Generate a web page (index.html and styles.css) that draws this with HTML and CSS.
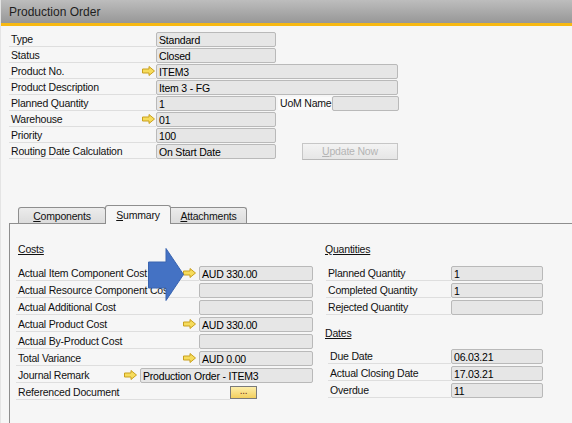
FILE: index.html
```html
<!DOCTYPE html>
<html lang="en">
<head>
<meta charset="utf-8">
<title>Production Order</title>
<link rel="stylesheet" href="styles.css">
</head>
<body>
<div class="window">
  <div class="titlebar">Production Order</div>

  <div class="header">
    <div class="row"><div class="lbl">Type</div><div class="fld w120">Standard</div></div>
    <div class="row"><div class="lbl">Status</div><div class="fld w120">Closed</div></div>
    <div class="row"><div class="lbl">Product No.<svg class="link" viewBox="0 0 13 10"><polygon points="0.5,3 7,3 7,0.5 12.5,5 7,9.5 7,7 0.5,7"/></svg></div><div class="fld w242">ITEM3</div></div>
    <div class="row"><div class="lbl">Product Description</div><div class="fld w242">Item 3 - FG</div></div>
    <div class="row"><div class="lbl">Planned Quantity</div><div class="fld w120">1</div><div class="uom">UoM Name</div><div class="fld w67"></div></div>
    <div class="row"><div class="lbl">Warehouse<svg class="link" viewBox="0 0 13 10"><polygon points="0.5,3 7,3 7,0.5 12.5,5 7,9.5 7,7 0.5,7"/></svg></div><div class="fld w120">01</div></div>
    <div class="row"><div class="lbl">Priority</div><div class="fld w120">100</div></div>
    <div class="row"><div class="lbl">Routing Date Calculation</div><div class="fld w120">On Start Date</div><div class="btn-update"><u>U</u>pdate Now</div></div>
  </div>

  <div class="tabs">
    <div class="tab tab-first"><u>C</u>omponents</div>
    <div class="tab tab-active"><u>S</u>ummary</div>
    <div class="tab"><u>A</u>ttachments</div>
  </div>

  <div class="panel">
    <div class="col col-left">
      <div class="heading">Costs</div>
      <div class="crow"><div class="clbl">Actual Item Component Cost<svg class="link link-c" viewBox="0 0 13 10"><polygon points="0.5,3 7,3 7,0.5 12.5,5 7,9.5 7,7 0.5,7"/></svg></div><div class="fld w114">AUD 330.00</div></div>
      <div class="crow"><div class="clbl">Actual Resource Component Cost</div><div class="fld w114"></div></div>
      <div class="crow"><div class="clbl">Actual Additional Cost</div><div class="fld w114"></div></div>
      <div class="crow"><div class="clbl">Actual Product Cost<svg class="link link-c" viewBox="0 0 13 10"><polygon points="0.5,3 7,3 7,0.5 12.5,5 7,9.5 7,7 0.5,7"/></svg></div><div class="fld w114">AUD 330.00</div></div>
      <div class="crow"><div class="clbl">Actual By-Product Cost</div><div class="fld w114"></div></div>
      <div class="crow"><div class="clbl">Total Variance<svg class="link link-c" viewBox="0 0 13 10"><polygon points="0.5,3 7,3 7,0.5 12.5,5 7,9.5 7,7 0.5,7"/></svg></div><div class="fld w114">AUD 0.00</div></div>
      <div class="crow"><div class="clbl clbl-short">Journal Remark<svg class="link link-c" viewBox="0 0 13 10"><polygon points="0.5,3 7,3 7,0.5 12.5,5 7,9.5 7,7 0.5,7"/></svg></div><div class="fld w173">Production Order - ITEM3</div></div>
      <div class="crow"><div class="clbl clbl-ref">Referenced Document</div><div class="btn-dots">...</div></div>
    </div>
    <div class="col col-right">
      <div class="heading">Quantities</div>
      <div class="crow qrow"><div class="qlbl">Planned Quantity</div><div class="fld w92">1</div></div>
      <div class="crow qrow"><div class="qlbl">Completed Quantity</div><div class="fld w92">1</div></div>
      <div class="crow qrow"><div class="qlbl">Rejected Quantity</div><div class="fld w92"></div></div>
      <div class="heading heading-dates">Dates</div>
      <div class="crow drow"><div class="qlbl dlbl">Due Date</div><div class="fld w92">06.03.21</div></div>
      <div class="crow drow"><div class="qlbl dlbl">Actual Closing Date</div><div class="fld w92">17.03.21</div></div>
      <div class="crow drow"><div class="qlbl dlbl">Overdue</div><div class="fld w92">11</div></div>
    </div>
  </div>

  <svg class="callout" viewBox="0 0 36 53"><polygon points="0.5,14 18,14 18,0.5 35.5,26.5 18,52.5 18,40 0.5,40"/></svg>
</div>
</body>
</html>
```

FILE: styles.css
```css
* { box-sizing: border-box; }
html, body { margin: 0; padding: 0; }
body {
  background: #f6f6f6;
  font-family: "Liberation Sans", Arial, sans-serif;
  font-size: 10.5px;
  letter-spacing: -0.2px;
  color: #111;
}
.window {
  position: relative;
  width: 572px;
  height: 423px;
  overflow: hidden;
  background: #f6f6f6;
  border-left: 1px solid #e4e4e4;
}
.titlebar {
  height: 26px;
  line-height: 24px;
  padding-left: 8px;
  font-size: 12px;
  letter-spacing: 0;
  color: #1e1e1e;
  background: linear-gradient(#bdbdbd, #979797);
  border-bottom: 3px solid #f8b912;
}
.header { padding-top: 6px; }
.row {
  display: flex;
  height: 15px;
  margin: 0 0 1px 8px;
}
.lbl {
  width: 147px;
  height: 15px;
  line-height: 15px;
  padding-left: 2px;
  border-bottom: 1px solid #dedede;
  display: flex;
  align-items: center;
  justify-content: space-between;
  white-space: nowrap;
}
.link {
  width: 13px;
  height: 10px;
  margin-right: 1px;
  flex: none;
}
.link polygon {
  fill: #f6dc5c;
  stroke: #c9a01e;
  stroke-width: 1;
  stroke-linejoin: round;
}
.fld {
  height: 15px;
  line-height: 14px;
  padding-left: 2px;
  background: #e6e6e6;
  border: 1px solid #b9b9b9;
  border-radius: 2px;
  white-space: nowrap;
  overflow: hidden;
  color: #000;
}
.w120 { width: 120px; }
.w242 { width: 242px; }
.w67 { width: 67px; }
.w114 { width: 114px; }
.w173 { width: 173px; }
.w92 { width: 92px; }
.uom {
  width: 53px;
  height: 13px;
  margin: 1px 1px 0 2px;
  line-height: 13px;
  padding-left: 2px;
  background: #fbfbfb;
  white-space: nowrap;
}
.btn-update {
  width: 96px;
  height: 17px;
  margin: -1px 0 0 26px;
  line-height: 15px;
  text-align: center;
  color: #b4b4b4;
  border: 1px solid #c6c6c6;
  border-bottom-color: #b8b8b8;
  background: linear-gradient(#f3f3f3, #e6e6e6);
}
.tabs {
  display: flex;
  align-items: flex-end;
  height: 18px;
  margin: 46px 0 0 17px;
}
.tab {
  height: 16px;
  line-height: 16px;
  text-align: center;
  border: 1px solid #8e8e8e;
  border-bottom: none;
  border-left: none;
  border-radius: 0 3px 0 0;
  background: linear-gradient(#ececec, #dcdcdc);
  color: #111;
}
.tab-first {
  width: 88px;
  border-left: 1px solid #8e8e8e;
  border-radius: 3px 3px 0 0;
}
.tab-active {
  position: relative;
  z-index: 1;
  width: 66px;
  height: 19px;
  margin-bottom: -1px;
  line-height: 19px;
  border-left: 1px solid #8e8e8e;
  border-radius: 3px 3px 0 0;
  background: #f6f6f6;
  margin-left: -1px;
}
.tab-active + .tab { width: 76px; }
.panel {
  display: flex;
  margin-left: 8px;
  height: 200px;
  padding: 18px 0 0 6px;
  border-top: 1px solid #8e8e8e;
  border-left: 1px solid #8e8e8e;
}
.col-left { width: 297px; }
.col-right { margin-left: 12px; }
.heading {
  height: 14px;
  line-height: 14px;
  margin-bottom: 10px;
  text-decoration: underline;
}
.col-left .heading { padding-left: 2px; }
.heading-dates { margin-top: 11px; margin-bottom: 9px; }
.crow {
  display: flex;
  height: 15px;
  margin-bottom: 2px;
}
.clbl {
  width: 183px;
  height: 15px;
  line-height: 15px;
  padding-left: 2px;
  border-bottom: 1px solid #dedede;
  display: flex;
  align-items: center;
  justify-content: space-between;
  white-space: nowrap;
}
.link-c { margin-right: 3px; }
.clbl-short { width: 124px; }
.clbl-ref { width: 214px; }
.btn-dots {
  width: 27px;
  height: 13px;
  margin-top: 1px;
  line-height: 8px;
  text-align: center;
  color: #6a2a1a;
  font-size: 10px;
  border: 1px solid #7a7a7a;
  background: linear-gradient(#fdeeaa, #f3cf5e);
}
.qrow { margin-left: 1px; }
.qlbl {
  width: 125px;
  height: 15px;
  line-height: 15px;
  padding-left: 2px;
  border-bottom: 1px solid #dedede;
  white-space: nowrap;
}
.drow { margin-left: 3px; }
.dlbl { width: 123px; }
.callout {
  position: absolute;
  left: 147px;
  top: 248px;
  width: 36px;
  height: 53px;
}
.callout polygon {
  fill: #4472c4;
  stroke: #3a64b0;
  stroke-width: 1;
}
```
